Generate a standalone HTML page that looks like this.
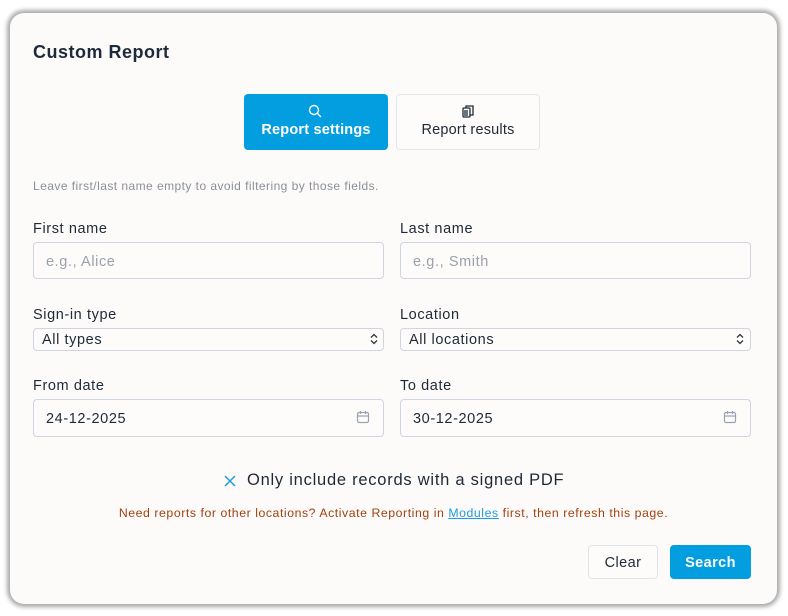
<!DOCTYPE html>
<html><head><style>
*{box-sizing:border-box;margin:0;padding:0}
body{width:788px;height:616px;background:#fff;font-family:"Liberation Sans",sans-serif;color:#1f2937;position:relative;overflow:hidden}
.card{position:absolute;left:10px;top:13px;width:767px;height:591px;background:#fcfbfa;border-radius:14px;box-shadow:0 0 4px 3px #a9a9a9}
.a{position:absolute}
h1{position:absolute;left:23px;top:29px;font-size:18px;font-weight:bold;color:#1e2a3c;letter-spacing:.5px}
.tab{position:absolute;top:81px;height:56px;border-radius:4px;font-size:14.5px;text-align:center;letter-spacing:.2px}
.lbl{position:absolute;font-size:14.5px;color:#1f2937;letter-spacing:.6px}
.inp{position:absolute;width:351px;border:1px solid #cfd6e2;border-radius:4px;background:#fdfcfb;font-size:14.5px;padding-left:12px;letter-spacing:.6px}
.ph{color:#9aa1ab}
.btn{position:absolute;top:532px;height:34px;border-radius:4px;font-size:14.5px;text-align:center;line-height:36px;letter-spacing:.4px}
</style></head><body>
<div class="card">
<h1>Custom Report</h1>
<div class="tab" style="left:234px;width:144px;background:#029ee0;color:#fff;font-weight:bold">
<svg class="a" style="left:64px;top:10px" width="14" height="14" viewBox="0 0 14 14" fill="none" stroke="#fff" stroke-width="1.4"><circle cx="6" cy="6" r="4.5"/><path d="M9.3 9.3L13 13"/></svg>
<div style="margin-top:28px">Report settings</div></div>
<div class="tab" style="left:386px;width:144px;border:1px solid #e2e6ec;background:#fdfcfb;color:#1f2937">
<svg class="a" style="left:64px;top:9px" width="14" height="15" viewBox="0 0 14 15" fill="none" stroke="#1f2937" stroke-width="1.3"><rect x="2" y="4" width="7" height="9" rx="1"/><path d="M5 4V2h7v9h-3M4 6v6M6 6v6"/></svg>
<div style="margin-top:27px">Report results</div></div>
<div class="a" style="left:23px;top:166px;font-size:12px;color:#8a9099;letter-spacing:.45px">Leave first/last name empty to avoid filtering by those fields.</div>
<div class="lbl" style="left:23px;top:208px">First name</div>
<div class="lbl" style="left:390px;top:208px">Last name</div>
<div class="inp ph" style="left:23px;top:229px;height:37px;line-height:38px">e.g., Alice</div>
<div class="inp ph" style="left:390px;top:229px;height:37px;line-height:38px">e.g., Smith</div>
<div class="lbl" style="left:23px;top:294px">Sign-in type</div>
<div class="lbl" style="left:390px;top:294px">Location</div>
<div class="inp" style="left:23px;top:315px;height:23px;line-height:23px;padding-left:8px">All types</div>
<div class="inp" style="left:390px;top:315px;height:23px;line-height:23px;padding-left:8px">All locations</div>
<svg class="a" style="left:360px;top:320px" width="8" height="12" viewBox="0 0 8 12" fill="none" stroke="#333" stroke-width="1.3"><path d="M1 4.5L4 1.5 7 4.5M1 7.5L4 10.5 7 7.5"/></svg>
<svg class="a" style="left:726px;top:320px" width="8" height="12" viewBox="0 0 8 12" fill="none" stroke="#333" stroke-width="1.3"><path d="M1 4.5L4 1.5 7 4.5M1 7.5L4 10.5 7 7.5"/></svg>
<div class="lbl" style="left:23px;top:365px">From date</div>
<div class="lbl" style="left:390px;top:365px">To date</div>
<div class="inp" style="left:23px;top:386px;height:38px;line-height:38px">24-12-2025</div>
<div class="inp" style="left:390px;top:386px;height:38px;line-height:38px">30-12-2025</div>
<svg class="a" style="left:346px;top:397px" width="14" height="14" viewBox="0 0 14 14" fill="none" stroke="#9aa3b2" stroke-width="1.2"><rect x="1.5" y="2.5" width="11" height="10" rx="1.5"/><path d="M1.5 6h11M4.5 1v3M9.5 1v3"/></svg>
<svg class="a" style="left:713px;top:397px" width="14" height="14" viewBox="0 0 14 14" fill="none" stroke="#9aa3b2" stroke-width="1.2"><rect x="1.5" y="2.5" width="11" height="10" rx="1.5"/><path d="M1.5 6h11M4.5 1v3M9.5 1v3"/></svg>
<svg class="a" style="left:214px;top:462px" width="12" height="12" viewBox="0 0 12 12" stroke="#1c9de0" stroke-width="1.5"><path d="M1 1L11 11M11 1L1 11"/></svg>
<div class="a" style="left:237px;top:458px;font-size:16.5px;color:#1f2937;letter-spacing:.75px">Only include records with a signed PDF</div>
<div class="a" style="left:0;width:767px;top:493px;text-align:center;font-size:12.3px;color:#a3400e;letter-spacing:.55px">Need reports for other locations? Activate Reporting in <span style="color:#1c9de0;text-decoration:underline">Modules</span> first, then refresh this page.</div>
<div class="btn" style="left:578px;width:70px;border:1px solid #dfe4ea;background:#fdfcfb;color:#1f2937;line-height:34px">Clear</div>
<div class="btn" style="left:660px;width:81px;background:#029ee0;color:#fff;font-weight:bold">Search</div>
</div>
</body></html>
